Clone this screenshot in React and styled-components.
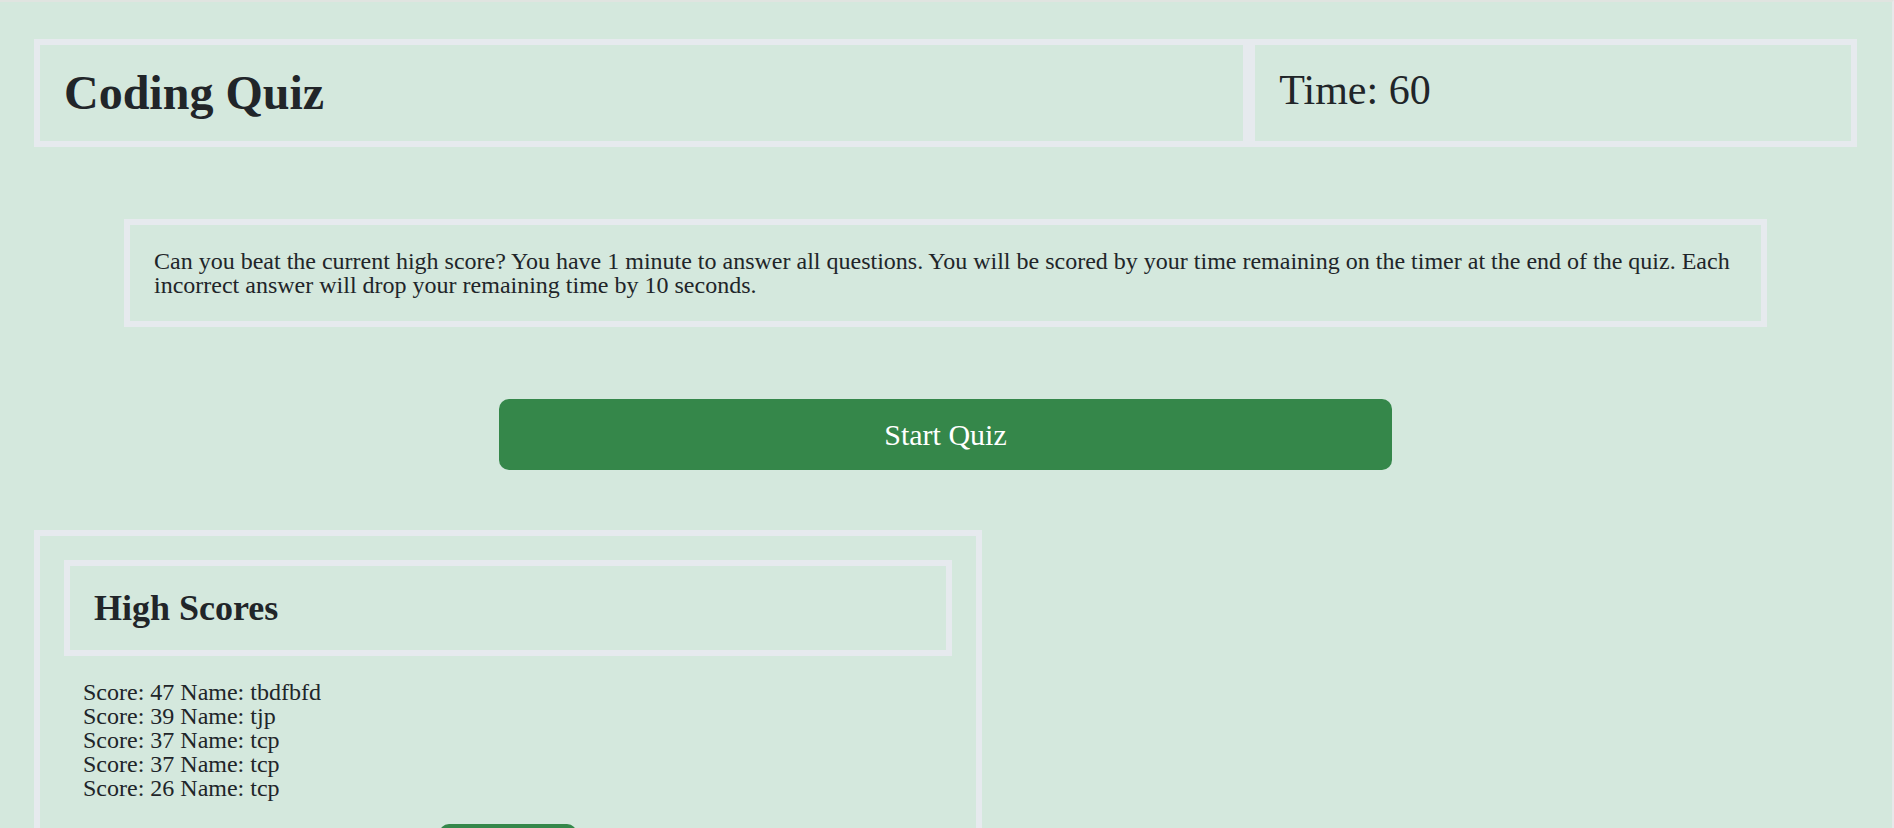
import { createGlobalStyle, styled } from "styled-components"

const GlobalStyle = createGlobalStyle`
    html, body {
        margin: 0;
        padding: 0;
    }

    body {
        background-color: #d4e8dd;
        border-top: 2px solid #e0e4e0;
        border-right: 2px solid #e6e9ea;
        font-family: "Liberation Serif", "Times New Roman", serif;
        color: #212529;
        line-height: 1;
    }
`

const scores = [
    { score: 47, name: "tbdfbfd" },
    { score: 39, name: "tjp" },
    { score: 37, name: "tcp" },
    { score: 37, name: "tcp" },
    { score: 26, name: "tcp" },
]

const App = () => {

    return (
        <>
            <GlobalStyle />
            <Page>
                <Header>
                    <TitleBox>
                        <H1>Coding Quiz</H1>
                    </TitleBox>
                    <TimerBox>
                        <Timer>Time: 60</Timer>
                    </TimerBox>
                </Header>

                <Intro>
                    <P>
                        Can you beat the current high score? You have 1 minute to answer all questions. You will be scored by your time remaining on the timer at the end of the quiz. Each incorrect answer will drop your remaining time by 10 seconds.
                    </P>
                </Intro>

                <StartRow>
                    <Button $wide>Start Quiz</Button>
                </StartRow>

                <ScorePanel>
                    <ScoreHeading>
                        <H2>High Scores</H2>
                    </ScoreHeading>
                    <ScoreList>
                        {scores.map((s, i) => (
                            <Score key={i}>Score: {s.score} Name: {s.name}</Score>
                        ))}
                    </ScoreList>
                    <ClearRow>
                        <Button>Clear</Button>
                    </ClearRow>
                </ScorePanel>
            </Page>
        </>
    )
}

const Page = styled.main`
    padding: 37px 35px 40px 34px;
`

const Box = styled.div`
    border: 6px solid #e6eaee;
    padding: 24px;
    box-sizing: border-box;
`

const Header = styled.header`
    display: flex;
    width: 100%;
`

const TitleBox = styled(Box)`
    flex: 0 0 66.6667%;
`

const TimerBox = styled(Box)`
    flex: 0 0 33.3333%;
`

const H1 = styled.h1`
    margin: 0;
    font-size: 48px;
    font-weight: 700;
    line-height: 1;
`

const Timer = styled.p`
    margin: 0;
    font-size: 42px;
    line-height: 1;
`

const Intro = styled(Box)`
    margin: 72px 90px 0;
`

const P = styled.p`
    margin: 0;
    font-size: 24px;
    line-height: 1;
`

const StartRow = styled.div`
    display: flex;
    justify-content: center;
    margin-top: 72px;
`

const Button = styled.button`
    display: flex;
    align-items: center;
    justify-content: center;
    width: ${(p) => (p.$wide ? "893px" : "138px")};
    height: 71px;
    border: none;
    border-radius: 10px;
    background-color: #35874a;
    color: #fff;
    font-family: "Liberation Serif", "Times New Roman", serif;
    font-size: 30px;
    cursor: pointer;

    &:hover {
        background-color: #2c7540;
    }
`

const ScorePanel = styled(Box)`
    width: 948px;
    margin-top: 60px;
`

const ScoreHeading = styled(Box)``

const H2 = styled.h2`
    margin: 0;
    font-size: 36px;
    font-weight: 700;
    line-height: 1;
`

const ScoreList = styled.ul`
    list-style: none;
    margin: 24px 0 0;
    padding: 0 19px;
`

const Score = styled.li`
    font-size: 24px;
    line-height: 24px;
`

const ClearRow = styled.div`
    display: flex;
    justify-content: center;
    margin-top: 24px;
`

export default App
